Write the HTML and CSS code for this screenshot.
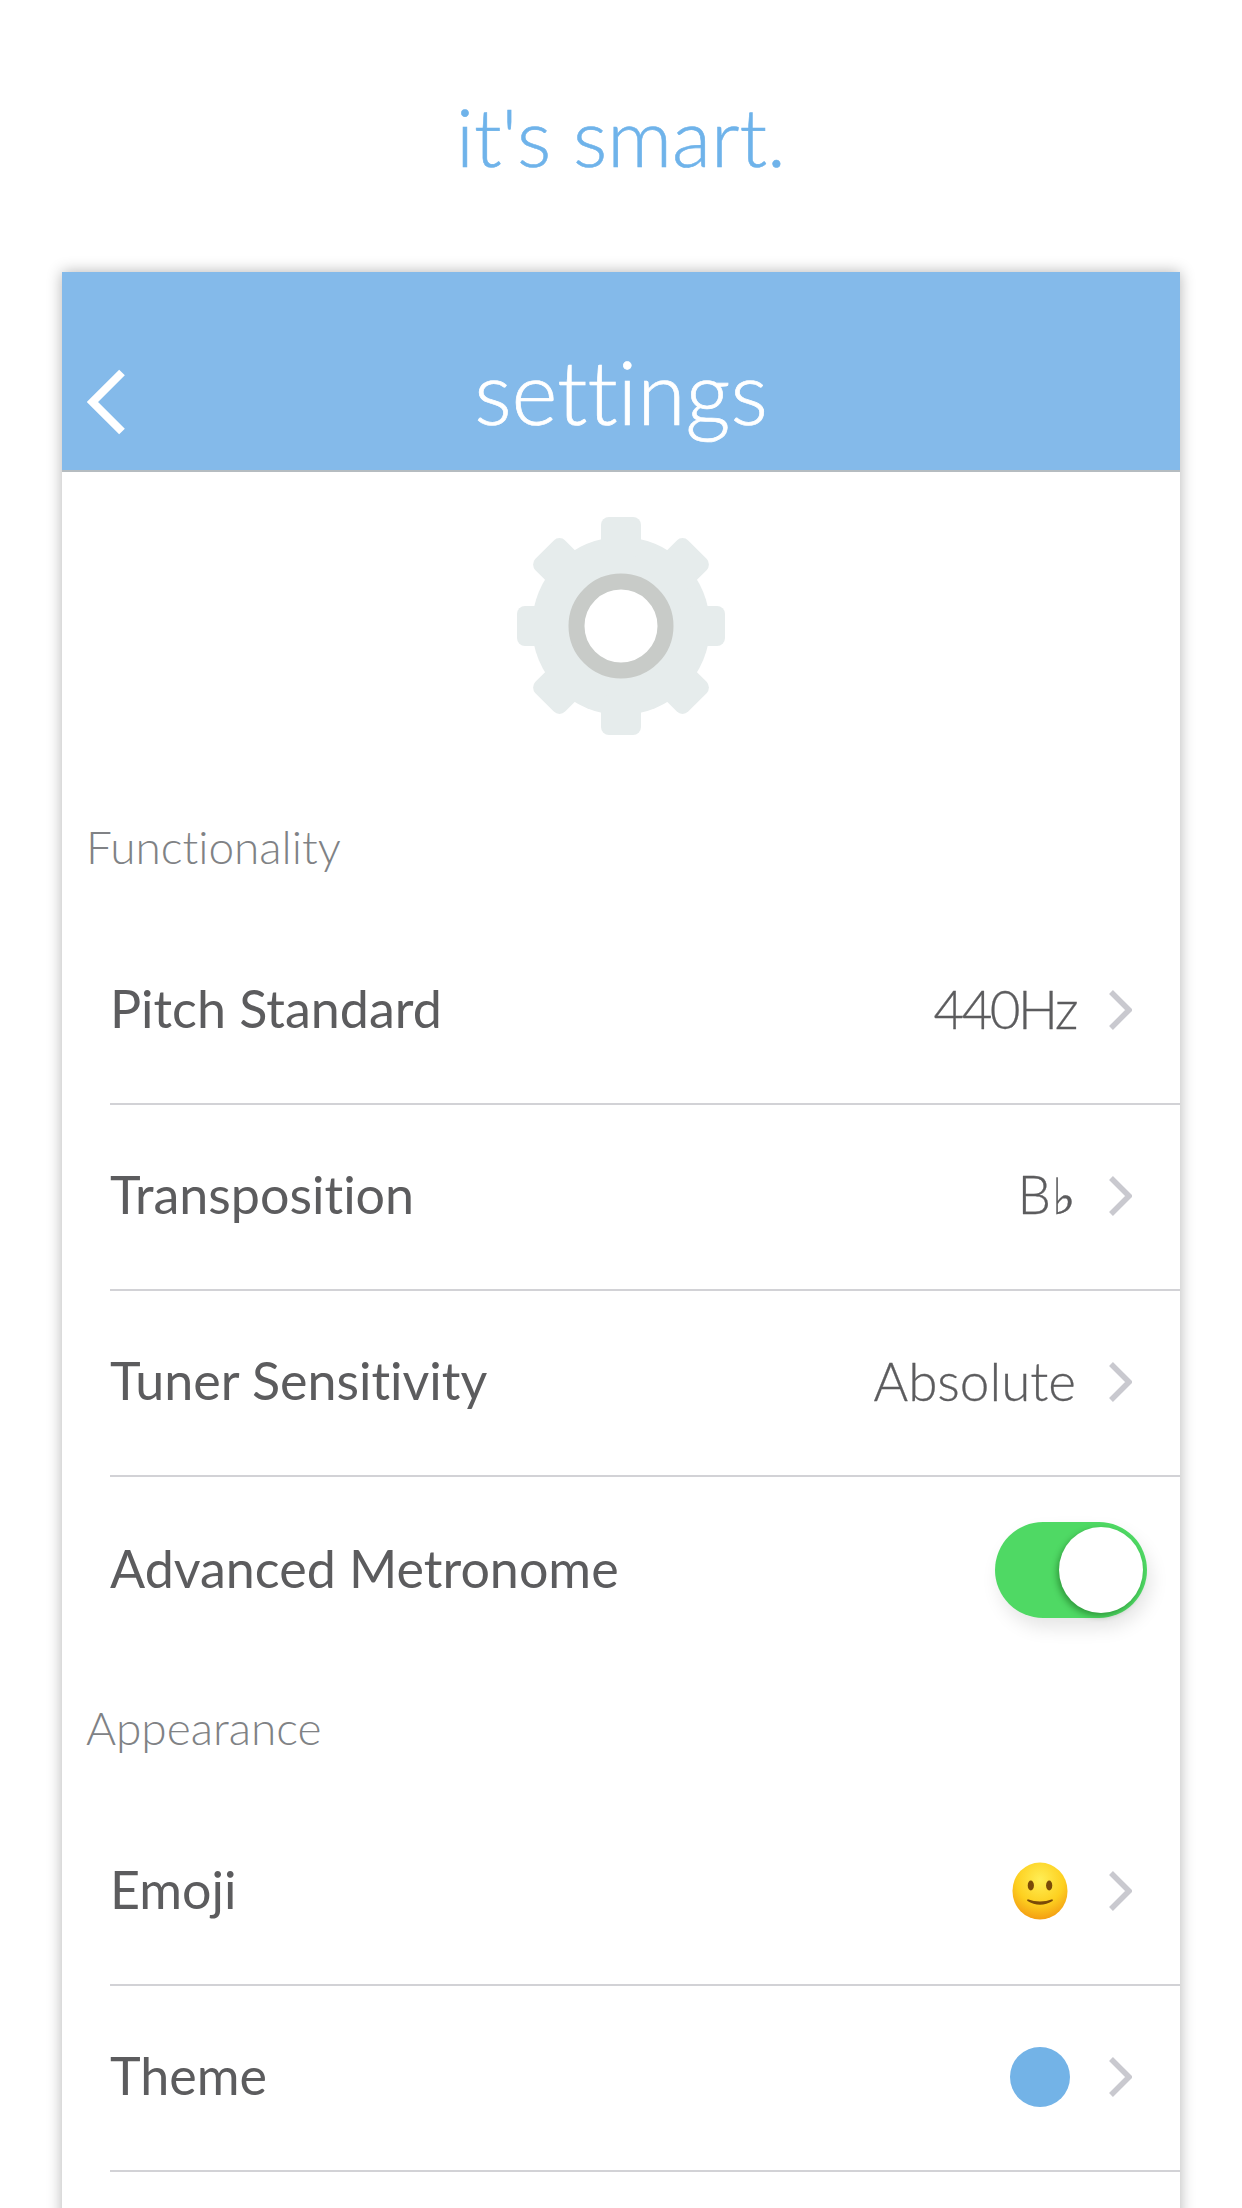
FILE: index.html
```html
<!DOCTYPE html>
<html lang="en">
<head>
<meta charset="utf-8">
<title>it's smart.</title>
<link rel="stylesheet" href="styles.css">
</head>
<body>
<div class="page">
  <h1 class="tagline">it's smart.</h1>
  <main class="card">
    <header class="nav">
      <svg class="back" width="38" height="66" viewBox="0 0 38 66"><path d="M35 3.500 L5.500 33 L35 62.500" fill="none" stroke="#fff" stroke-width="8"/></svg>
      <div class="nav-title">settings</div>
    </header>
    <div class="gear-wrap">
      <svg class="gear" width="208" height="218" viewBox="0 0 208 218">
        <g fill="#e6ecec">
          <circle cx="104" cy="109" r="89"/>
          <rect x="84" y="0" width="40" height="40" rx="8"/>
          <rect x="84" y="178" width="40" height="40" rx="8"/>
          <rect x="0" y="89" width="40" height="40" rx="8"/>
          <rect x="168" y="89" width="40" height="40" rx="8"/>
          <g transform="rotate(45 104 109)">
            <rect x="83" y="1" width="42" height="40" rx="8"/>
            <rect x="83" y="177" width="42" height="40" rx="8"/>
            <rect x="-4" y="88" width="40" height="42" rx="8"/>
            <rect x="172" y="88" width="40" height="42" rx="8"/>
          </g>
        </g>
        <circle cx="104" cy="109" r="44.500" fill="#fff" stroke="#c8cbc8" stroke-width="16"/>
      </svg>
    </div>
    <section class="section">
      <h2 class="section-title">Functionality</h2>
      <div class="row"><span class="label">Pitch Standard</span><span class="value value-num">440Hz</span><svg class="chev" width="24" height="40" viewBox="0 0 24 40"><path d="M3 2 L21 20 L3 38" fill="none" stroke="#c9c9cf" stroke-width="5.500"/></svg></div>
      <div class="row"><span class="label">Transposition</span><span class="value">B<span class="flat">♭</span></span><svg class="chev" width="24" height="40" viewBox="0 0 24 40"><path d="M3 2 L21 20 L3 38" fill="none" stroke="#c9c9cf" stroke-width="5.500"/></svg></div>
      <div class="row"><span class="label">Tuner Sensitivity</span><span class="value">Absolute</span><svg class="chev" width="24" height="40" viewBox="0 0 24 40"><path d="M3 2 L21 20 L3 38" fill="none" stroke="#c9c9cf" stroke-width="5.500"/></svg></div>
      <div class="row row-last"><span class="label">Advanced Metronome</span><span class="toggle"><span class="knob"></span></span></div>
    </section>
    <section class="section">
      <h2 class="section-title">Appearance</h2>
      <div class="row"><span class="label">Emoji</span>
        <svg class="emoji" width="56" height="58" viewBox="0 0 58 58" preserveAspectRatio="none">
          <defs>
            <radialGradient id="face" cx="50%" cy="30%" r="72%"><stop offset="0" stop-color="#ffee55"/><stop offset="0.6" stop-color="#fdd020"/><stop offset="1" stop-color="#f39a12"/></radialGradient>
          </defs>
          <circle cx="29" cy="29" r="28.500" fill="url(#face)"/>
          <ellipse cx="19.500" cy="23.500" rx="3.200" ry="5" fill="#7a4a08"/>
          <ellipse cx="38.500" cy="23.500" rx="3.200" ry="5" fill="#7a4a08"/>
          <path d="M16 38 Q29 46 42 38 Q29 42.500 16 38 Z" fill="#7a4a08" stroke="#7a4a08" stroke-width="1.500"/>
        </svg>
        <svg class="chev" width="24" height="40" viewBox="0 0 24 40"><path d="M3 2 L21 20 L3 38" fill="none" stroke="#c9c9cf" stroke-width="5.500"/></svg></div>
      <div class="row"><span class="label">Theme</span><span class="dot"></span><svg class="chev" width="24" height="40" viewBox="0 0 24 40"><path d="M3 2 L21 20 L3 38" fill="none" stroke="#c9c9cf" stroke-width="5.500"/></svg></div>
    </section>
  </main>
</div>
</body>
</html>
```

FILE: styles.css
```css
* { box-sizing: border-box; }
html, body { margin: 0; padding: 0; background: #fff; }
.page {
  width: 1242px;
  height: 2208px;
  overflow: hidden;
  padding: 0 62px;
  font-family: Lato, "Open Sans", sans-serif;
  font-variant-ligatures: none;
}
.tagline {
  margin: 0;
  height: 272px;
  padding-top: 91px;
  text-align: center;
  font-size: 80.500px;
  line-height: 90px;
  font-weight: 300;
  color: #6fb3ea;
  -webkit-text-stroke: 0.6px #6fb3ea;
}
.card {
  height: 2000px;
  background: #fff;
  box-shadow: 0 0 14px rgba(0, 0, 0, 0.3);
}
.nav {
  height: 200px;
  background: #84baea;
  border-bottom: 2px solid #b5bcc0;
  display: flex;
  align-items: center;
  justify-content: center;
  position: relative;
  padding-top: 40px;
}
.back { position: absolute; left: 25px; top: 97px; }
.nav-title {
  font-size: 88px;
  line-height: 100px;
  font-weight: 300;
  color: #fff;
  -webkit-text-stroke: 0.7px #fff;
}
.gear-wrap {
  height: 311px;
  display: flex;
  justify-content: center;
  padding-top: 45px;
}
.section-title {
  margin: 0;
  height: 136px;
  padding: 36px 0 0 24px;
  font-size: 46px;
  line-height: 56px;
  font-weight: 300;
  color: #808285;
}
.row {
  height: 186px;
  margin-left: 48px;
  border-bottom: 2px solid #d2d2d6;
  display: flex;
  align-items: center;
  padding-right: 48px;
  padding-bottom: 2px;
}
.row-last { height: 187px; border-bottom: 0; padding-right: 33px; }
.label {
  flex: 1;
  font-size: 52px;
  color: #5c5c5e;
  font-weight: 400;
  margin-bottom: 4px;
}
.value {
  font-size: 53px;
  font-weight: 300;
  color: #5c5c5e;
  margin-right: 32px;
  margin-bottom: 4px;
  -webkit-text-stroke: 0.3px #5c5c5e;
}
.value-num { letter-spacing: -2.500px; }
.flat { font-family: "DejaVu Sans", sans-serif; font-size: 50px; margin-left: 1px; }
.chev { flex: none; }
.emoji { flex: none; margin-right: 40px; }
.dot {
  flex: none;
  width: 60px;
  height: 60px;
  border-radius: 50%;
  background: #73b3e7;
  margin-right: 38px;
}
.toggle {
  flex: none;
  width: 152px;
  height: 96px;
  border-radius: 48px;
  background: #4fd964;
  position: relative;
  box-shadow: 4px 10px 18px rgba(0, 0, 0, 0.1);
}
.knob {
  position: absolute;
  right: 4px;
  top: 5px;
  width: 84px;
  height: 86px;
  border-radius: 50%;
  background: #fff;
  box-shadow: -2px 3px 6px rgba(0, 60, 0, 0.4);
}
```
